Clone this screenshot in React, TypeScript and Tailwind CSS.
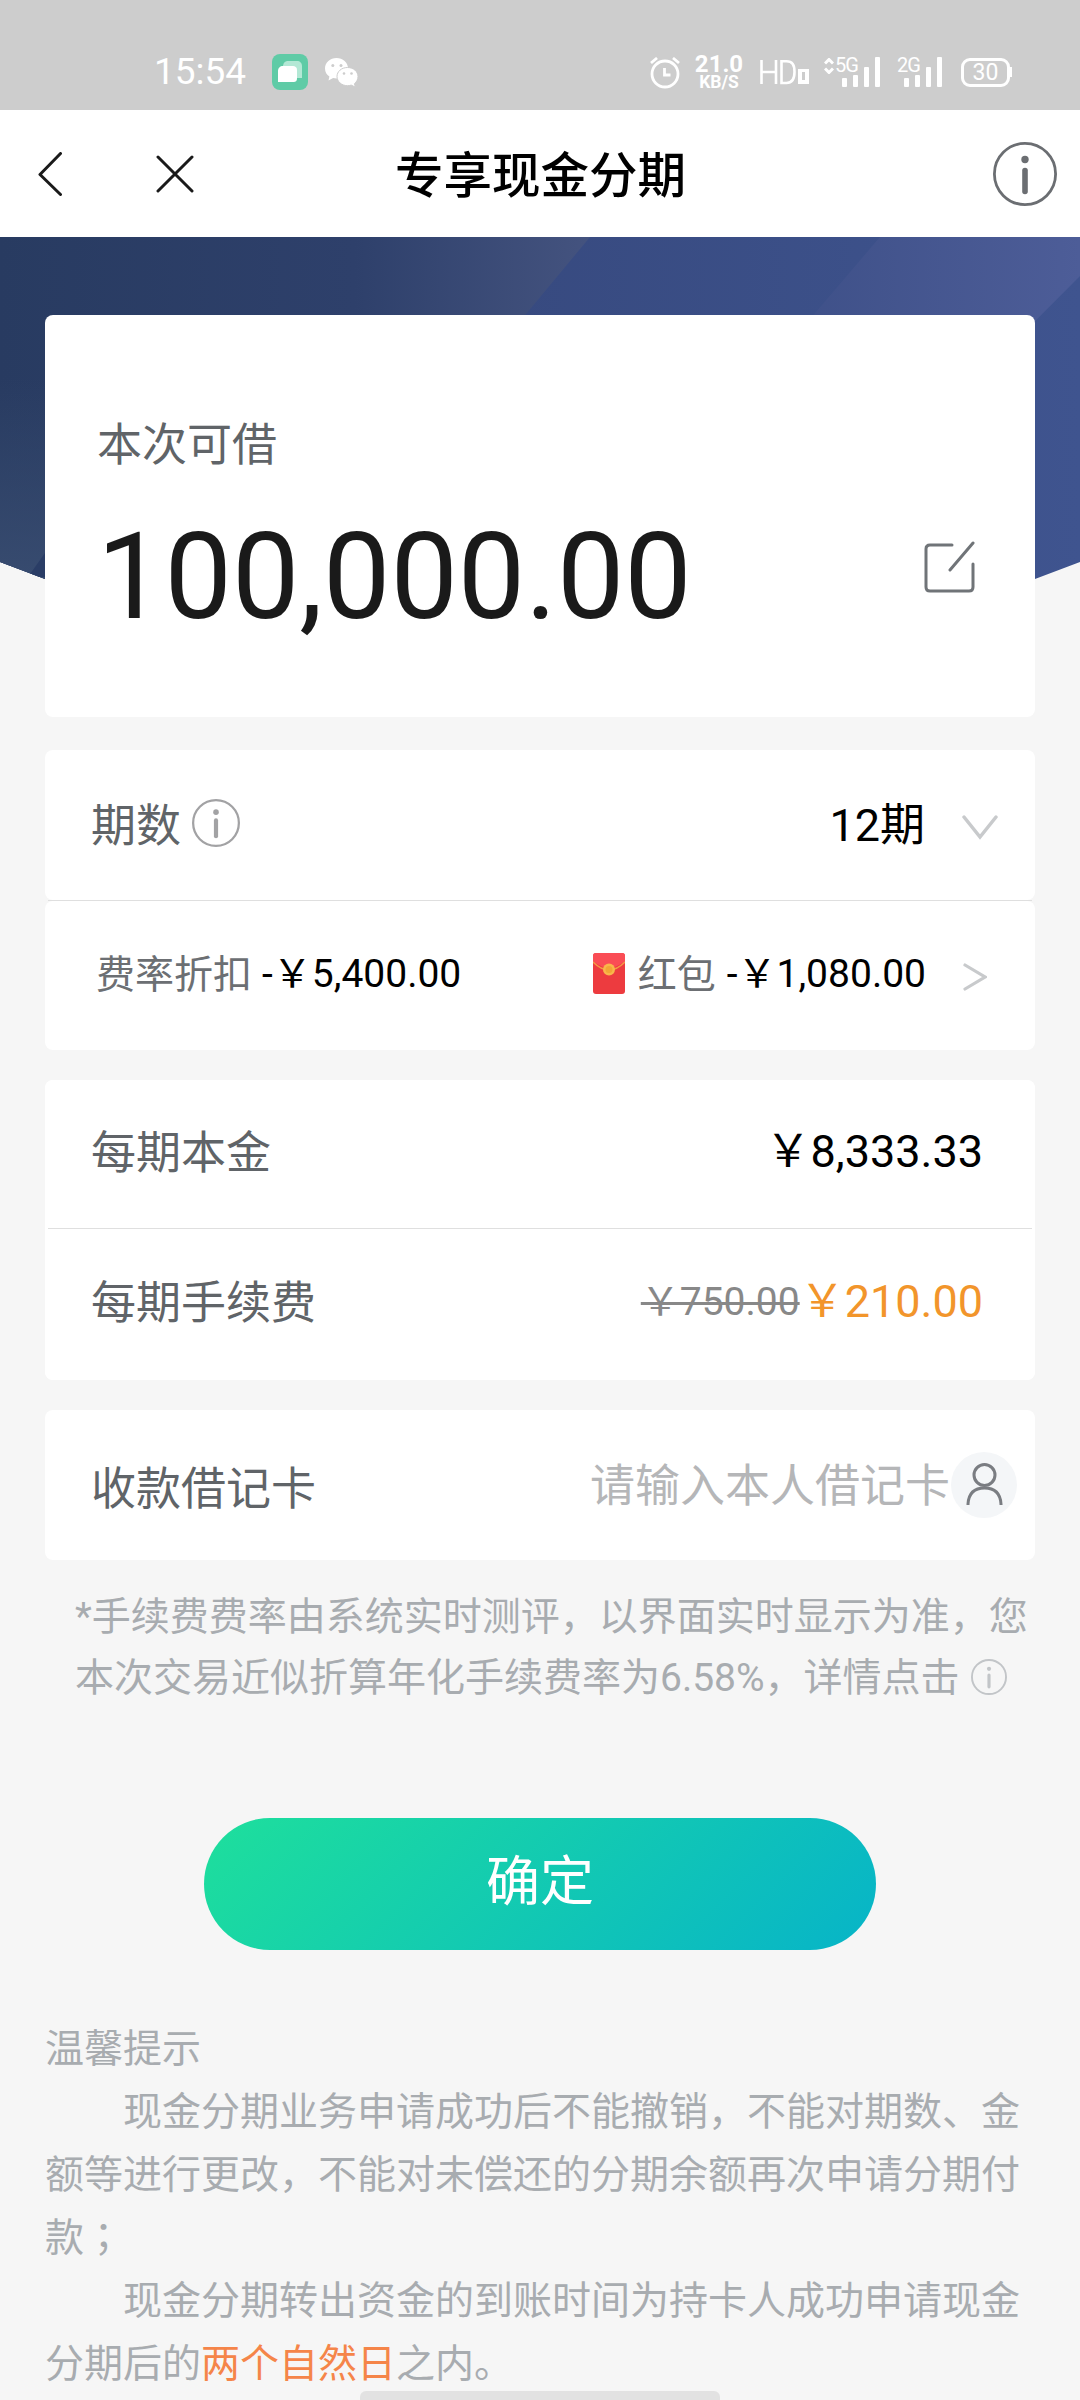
import type { ReactNode } from 'react';

function InfoIcon({ className, strokeWidth }: { className: string; strokeWidth: number }) {
  return (
    <svg viewBox="0 0 64 64" fill="none" stroke="currentColor" className={className}>
      <circle cx="32" cy="32" r={32 - strokeWidth / 2} strokeWidth={strokeWidth} />
      <circle cx="32" cy="17.500" r="3.700" fill="currentColor" stroke="none" />
      <path d="M32 28.500v21" strokeWidth="5.600" strokeLinecap="round" />
    </svg>
  );
}

function SignalBars() {
  return (
    <svg width="38" height="30" viewBox="0 0 38 30" fill="currentColor">
      <rect x="0" y="21" width="5" height="9" rx="1" />
      <rect x="11" y="18" width="5" height="12" rx="1" />
      <rect x="22" y="10" width="5" height="20" rx="1" />
      <rect x="33" y="0" width="5" height="30" rx="1" />
    </svg>
  );
}

function StatusBar() {
  return (
    <div className="flex h-[110px] items-start bg-[#cdcdcd] pt-[54px] text-white">
      <div className="ml-[154px] flex h-[36px] items-center">
        <span className="w-[94px] text-[37px] leading-[36px]">15:54</span>
        <svg width="36" height="36" viewBox="0 0 36 36" className="ml-6">
          <rect width="36" height="36" rx="8" fill="#5fcba6" />
          <path d="M11 13c0-4 2-6 5-6h9c3 0 5 2 5 5v12h-6V13z" fill="#b3e8d5" />
          <path d="M11 12h10c2 0 4 1 4 4v8c0 3-1 4-4 4H6V17c0-3 2-5 5-5z" fill="#fff" />
        </svg>
        <svg width="34" height="30" viewBox="0 0 34 30" className="ml-[17px]">
          <path d="M11.500 1C5.200 1 0 5.600 0 11.400c0 3.400 1.700 6.300 4.400 8.200L3.500 23.500l4.600-2.400c1.100.3 2.200.4 3.400.4 6.300 0 11.500-4.400 11.500-10.200S17.800 1 11.500 1z" fill="#fff" />
          <path d="M22.500 10.500c-6 0-10.500 4-10.500 9s4.500 9.200 10.500 9.200c1.300 0 2.600-.2 3.700-.6l4.200 2-1-3.400c2.200-1.700 3.600-4.300 3.600-7.200 0-5-4.500-9-10.500-9z" fill="#fff" stroke="#cdcdcd" />
          <g fill="#cdcdcd">
            <circle cx="7.800" cy="8.400" r="1.500" />
            <circle cx="16" cy="8.400" r="1.500" />
            <circle cx="19" cy="16.500" r="1.300" />
            <circle cx="26.500" cy="16.500" r="1.300" />
          </g>
        </svg>
      </div>

      <div className="ml-[291px] flex h-[36px]">
        <svg width="30" height="32" viewBox="0 0 30 32" fill="none" stroke="currentColor" className="mt-[3px]" strokeWidth="2.800">
          <circle cx="15" cy="17" r="13" />
          <path d="M14.500 11v7h6M1 6l6-5M29 6l-6-5" />
        </svg>
        <div className="ml-[15px] flex w-[48px] flex-col items-center font-bold">
          <span className="text-[24px] leading-[20px]">21.0</span>
          <span className="text-[17.500px] leading-[17px]">KB/S</span>
        </div>
        <svg width="49" height="30" viewBox="0 0 49 30" fill="none" stroke="currentColor" className="ml-[17px] mt-1" strokeWidth="2.600">
          <path d="M1.500 2v24M16 2v24M1.500 14H16M21.500 3.300V25h5c6 0 8-4 8-11s-2-10.700-8-10.700z" />
          <path d="M38 11h11v15H38zM42 14v8h3v-8z" fill="currentColor" fillRule="evenodd" stroke="none" />
        </svg>
        <div className="relative ml-[33px] mt-[3px] w-[38px]">
          <SignalBars />
          <span className="absolute -left-[7px] -top-[1px] text-[20px] leading-[18px] tracking-[-1px]">5G</span>
          <svg width="10" height="16" viewBox="0 0 10 16" fill="none" stroke="currentColor" strokeWidth="3" className="absolute -left-[18px] top-[1px]">
            <path d="M1 5.500l4-4 4 4M1 10.500l4 4 4-4" />
          </svg>
        </div>
        <div className="relative ml-[24px] mt-[3px] w-[38px]">
          <SignalBars />
          <span className="absolute -left-[7px] -top-[1px] text-[20px] leading-[18px] tracking-[-1px]">2G</span>
        </div>
        <div className="relative ml-[19px] mt-1 flex h-[29px] w-[49px] items-center justify-center rounded-[9px] border-[3px] border-white">
          <span className="text-[23px] leading-[24px]">30</span>
          <span className="absolute -right-[5px] top-[6px] h-[10px] w-[3px] bg-white" />
        </div>
      </div>
    </div>
  );
}

function NavBar() {
  return (
    <header className="flex h-[127px] items-center bg-white pl-[38px] pr-[23px]">
      <svg width="24" height="44" viewBox="0 0 24 44" fill="none" stroke="#1a1a1a" strokeWidth="3" strokeLinecap="round" strokeLinejoin="round">
        <path d="M22.500 1.500L2 22.500l20.500 20" />
      </svg>
      <svg width="38" height="38" viewBox="0 0 38 38" fill="none" stroke="#1a1a1a" strokeWidth="3" strokeLinecap="round" className="ml-[94px]">
        <path d="M2 2l34 34M36 2L2 36" />
      </svg>
      <h1 className="ml-[201px] mt-[6px] text-[48.500px] font-medium leading-[60px] text-black">专享现金分期</h1>
      <InfoIcon className="ml-auto h-[64px] w-[64px] text-[#6b6e72]" strokeWidth={2.8} />
    </header>
  );
}

function HeroBackground() {
  return (
    <svg width="1080" height="470" viewBox="0 0 1080 470" className="absolute left-0 top-0">
      <defs>
        <linearGradient id="heroLeft" x1="0" y1="0" x2="1" y2="0">
          <stop offset="0" stopColor="#283b61" />
          <stop offset="0.600" stopColor="#2e406b" />
          <stop offset="1" stopColor="#44537f" />
        </linearGradient>
        <linearGradient id="heroEdge" x1="0" y1="0" x2="0" y2="1">
          <stop offset="0.300" stopColor="#384c70" stopOpacity="0" />
          <stop offset="0.750" stopColor="#384c70" />
        </linearGradient>
        <linearGradient id="heroRight" x1="0" y1="0" x2="1" y2="0">
          <stop offset="0" stopColor="#304172" />
          <stop offset="1" stopColor="#3f548f" />
        </linearGradient>
        <linearGradient id="heroBand" x1="0" y1="0" x2="1" y2="0">
          <stop offset="0.400" stopColor="#3e5088" />
          <stop offset="1" stopColor="#4d5d98" />
        </linearGradient>
        <clipPath id="heroShape">
          <path d="M0 0h1080v325l-45 17q-495 190-990 0L0 325z" />
        </clipPath>
      </defs>
      <g clipPath="url(#heroShape)">
        <rect width="1080" height="470" fill="url(#heroRight)" />
        <path d="M0 0h590L200 470H0z" fill="url(#heroLeft)" />
        <rect width="60" height="470" fill="url(#heroEdge)" />
        <path d="M45 316L28 340h32v-24z" fill="#2a3d66" />
        <path d="M880 0h200v39L780 340H590z" fill="url(#heroBand)" />
      </g>
    </svg>
  );
}

function Row({ children, className }: { children: ReactNode; className: string }) {
  return <div className={`flex items-center bg-white pl-[46px] ${className}`}>{children}</div>;
}

export default function App() {
  return (
    <div
      lang="zh-CN"
      className="h-[2400px] w-[1080px] overflow-hidden bg-[#f6f6f6] font-['Roboto','Noto_Sans_CJK_SC',sans-serif] text-[45px] leading-[60px] text-[#606468]"
    >
      <StatusBar />
      <NavBar />

      <main className="relative h-[2163px] px-[45px] pt-[78px]">
        <HeroBackground />

        {/* Available amount */}
        <section className="relative h-[402px] rounded-lg bg-white pl-[52px] pt-[101px]">
          <p>本次可借</p>
          <div className="flex items-center justify-between pr-[60px]">
            <span className="mt-[31px] text-[120px] leading-[140px] text-[#1a1a1a]">100,000.00</span>
            <svg width="52" height="52" viewBox="0 0 52 52" fill="none" stroke="#707478" strokeWidth="3" strokeLinecap="round" className="mt-[11px]">
              <path d="M29 4H7Q3 4 3 8v38q0 4 4 4h39q4 0 4-4V23M50 2L27 29" />
            </svg>
          </div>
        </section>

        {/* Periods and discounts */}
        <section className="relative mt-[33px]">
          <Row className="h-[150px] rounded-lg pr-[37px]">
            <span className="mt-[3px]">期数</span>
            <InfoIcon className="-mt-[5px] ml-[11px] h-[48px] w-[48px] text-[#a2a2a4]" strokeWidth={3} />
            <span className="ml-auto mt-[2px] text-black">12期</span>
            <svg width="36" height="26" viewBox="0 0 36 26" fill="none" stroke="#c8cacc" strokeWidth="3.500" strokeLinecap="round" className="ml-[37px] mt-[5px]">
              <path d="M2 2l16 20L34 2" />
            </svg>
          </Row>
          <div className="mx-[3px] h-px bg-[#dfdfdf]" />
          <Row className="h-[149px] rounded-lg pb-[4px] pr-[48px] text-[39px]">
            <span className="ml-[5px] mt-[2px] text-[#6c6f73]">费率折扣</span>
            <span className="ml-[10px] text-black">-￥5,400.00</span>
            <svg width="32" height="41" viewBox="0 0 32 41" className="ml-auto">
              <rect width="32" height="41" rx="3" fill="#ed3b3f" />
              <path d="M0 3q0-3 3-3h26q3 0 3 3v6L16 17 0 9z" fill="#fa4d55" />
              <path d="M0 9q8 8 16 8t16-8" fill="none" stroke="#f59a45" strokeWidth="1.500" />
              <circle cx="16" cy="16.500" r="6" fill="#f9b64b" />
              <circle cx="16" cy="16.500" r="3.500" fill="#f3a536" />
            </svg>
            <span className="ml-[13px] mt-[2px] text-[#6c6f73]">红包</span>
            <span className="ml-[11px] text-black">-￥1,080.00</span>
            <svg width="24" height="28" viewBox="0 0 24 28" fill="none" stroke="#c8cacc" strokeWidth="3.200" strokeLinecap="round" className="ml-[37px] mt-[7px]">
              <path d="M2 2l20 12L2 26" />
            </svg>
          </Row>
        </section>

        {/* Per-period amounts */}
        <section className="relative mt-[30px] overflow-hidden rounded-lg bg-white">
          <Row className="h-[148px] pb-[4px] pr-[52px]">
            <span className="mt-[3px]">每期本金</span>
            <span className="ml-auto text-black">￥8,333.33</span>
          </Row>
          <div className="mx-[3px] h-px bg-[#dfdfdf]" />
          <Row className="h-[151px] pb-[5px] pr-[52px]">
            <span className="mt-[3px]">每期手续费</span>
            <span className="ml-auto text-[39px] text-[#888888] line-through decoration-[3px]">￥750.00</span>
            <span className="text-[#f2952b]">￥210.00</span>
          </Row>
        </section>

        {/* Receiving card */}
        <section className="relative mt-[30px]">
          <Row className="h-[150px] rounded-lg pr-[18px]">
            <span className="mt-[9px]">收款借记卡</span>
            <span className="ml-auto mt-[3px] text-[#b5b6b8]">请输入本人借记卡</span>
            <svg width="66" height="66" viewBox="0 0 66 66" fill="none" className="ml-px">
              <circle cx="33" cy="33" r="33" fill="#f4f6f8" />
              <g stroke="#7a7d82" strokeWidth="3">
                <circle cx="33.500" cy="23" r="10.500" />
                <path d="M17 53v-1q1-16 16.500-16T50 52v1" />
              </g>
            </svg>
          </Row>
        </section>

        <div className="mt-[27px] pl-[30px] text-[39px] leading-[61px] text-[#a8acb0]">
          <p className="whitespace-nowrap">*手续费费率由系统实时测评，以界面实时显示为准，您</p>
          <p className="flex items-center whitespace-nowrap">
            本次交易近似折算年化手续费率为6.58%，详情点击
            <InfoIcon className="-mt-[4px] ml-[11px] h-[36px] w-[36px] text-[#c2c5c8]" strokeWidth={3.4} />
          </p>
        </div>

        <button className="mx-auto mt-[109px] block h-[132px] w-[672px] rounded-full bg-[linear-gradient(135deg,#1edf9c,#07b4c8)] pb-[3px] text-[54px] text-white">
          确定
        </button>

        {/* Tips */}
        <div className="mt-[68px] text-[39px] leading-[63px] text-[#a8acb0]">
          <p>温馨提示</p>
          <p className="whitespace-nowrap">　　现金分期业务申请成功后不能撤销，不能对期数、金</p>
          <p className="whitespace-nowrap">额等进行更改，不能对未偿还的分期余额再次申请分期付</p>
          <p>
            款<span lang="zh-TW" className="font-['Noto_Sans_CJK_TC',sans-serif] leading-none">；</span>
          </p>
          <p className="whitespace-nowrap">　　现金分期转出资金的到账时间为持卡人成功申请现金</p>
          <p>
            分期后的<span className="text-[#f58549]">两个自然日</span>之内。
          </p>
        </div>

        {/* Home indicator */}
        <div className="absolute bottom-0 left-[360px] h-[9px] w-[360px] rounded-t-md bg-[#e2e2e2]" />
      </main>
    </div>
  );
}
